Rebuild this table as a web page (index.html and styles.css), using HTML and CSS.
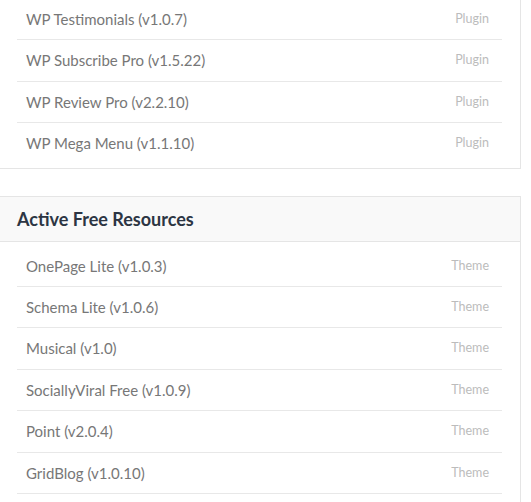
FILE: index.html
```html
<!DOCTYPE html>
<html>
<head>
<meta charset="utf-8">
<link rel="stylesheet" href="styles.css">
</head>
<body>
<div class="page">
  <section class="card card-top">
    <ul class="list">
      <li class="row"><span class="name">WP Testimonials (v1.0.7)</span><span class="type">Plugin</span></li>
      <li class="row"><span class="name">WP Subscribe Pro (v1.5.22)</span><span class="type">Plugin</span></li>
      <li class="row"><span class="name">WP Review Pro (v2.2.10)</span><span class="type">Plugin</span></li>
      <li class="row"><span class="name">WP Mega Menu (v1.1.10)</span><span class="type">Plugin</span></li>
    </ul>
  </section>
  <section class="card card-bottom">
    <h2 class="card-head">Active Free Resources</h2>
    <ul class="list">
      <li class="row"><span class="name">OnePage Lite (v1.0.3)</span><span class="type">Theme</span></li>
      <li class="row"><span class="name">Schema Lite (v1.0.6)</span><span class="type">Theme</span></li>
      <li class="row"><span class="name">Musical (v1.0)</span><span class="type">Theme</span></li>
      <li class="row"><span class="name">SociallyViral Free (v1.0.9)</span><span class="type">Theme</span></li>
      <li class="row"><span class="name">Point (v2.0.4)</span><span class="type">Theme</span></li>
      <li class="row"><span class="name">GridBlog (v1.0.10)</span><span class="type">Theme</span></li>
    </ul>
  </section>
</div>
</body>
</html>
```
FILE: styles.css
```css
html, body {
  margin: 0;
  padding: 0;
  background: #fff;
}
body {
  font-family: Lato, "Open Sans", sans-serif;
  overflow: hidden;
}
.page {
  width: 522px;
  margin-left: -1px;
  margin-top: -6px;
}
.card {
  border: 1px solid #e5e5e5;
  background: #fff;
}
.card-top {
  margin-bottom: 27px;
}
.card-bottom .list {
  padding-bottom: 20px;
}
.card-head {
  margin: 0;
  height: 44px;
  display: flex;
  align-items: center;
  padding: 0 0 0 17px;
  background: #f9f9f9;
  border-bottom: 1px solid #e5e5e5;
  font-size: 18px;
  font-weight: 700;
  color: #2c3543;
}
.list {
  list-style: none;
  margin: 0;
  padding: 4px 18px 4px 17px;
}
.row {
  display: flex;
  justify-content: space-between;
  align-items: center;
  padding: 12px 13px 12px 9px;
  line-height: 16.4px;
  border-bottom: 1px solid #e8e8e8;
}
.card-top .row:last-child {
  border-bottom: none;
}
.name {
  font-size: 15px;
  color: #777;
}
.type {
  font-size: 12.5px;
  color: #bcbcbc;
}
```
